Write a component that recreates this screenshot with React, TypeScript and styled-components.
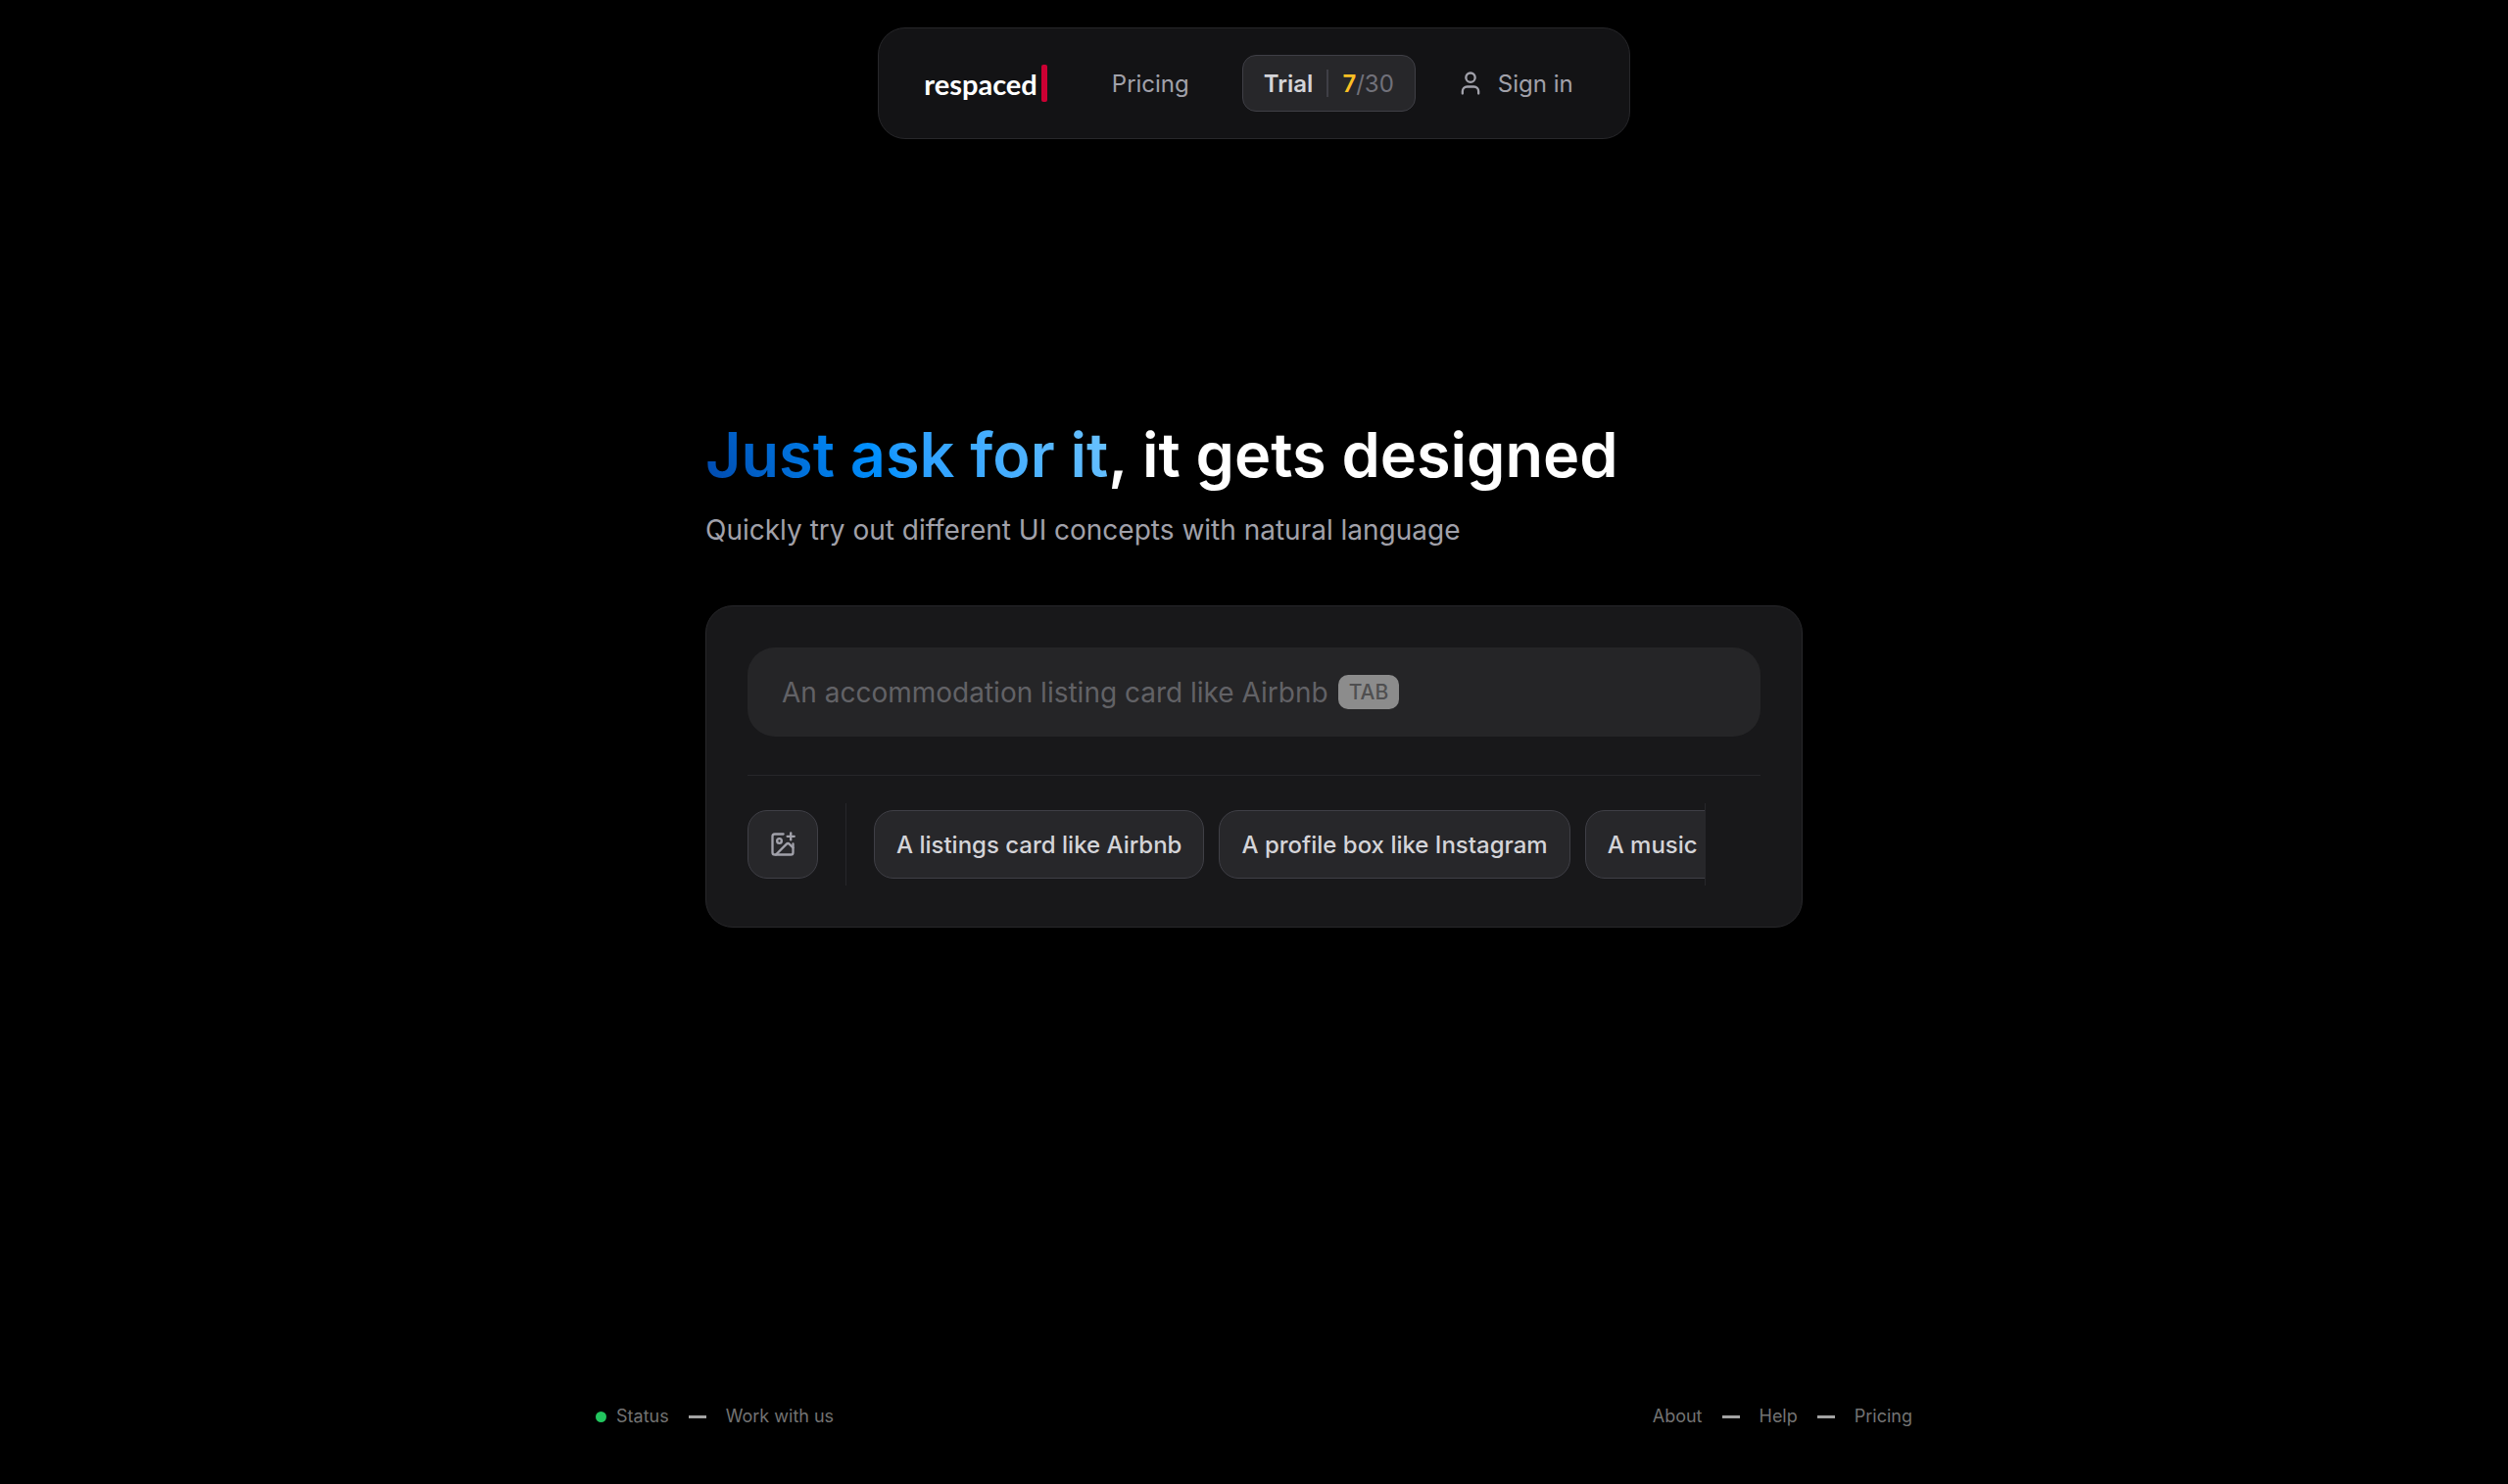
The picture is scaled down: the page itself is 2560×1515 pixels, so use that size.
import React, { useState } from "react";
import styled, { createGlobalStyle } from "styled-components";
import { ImagePlus, User } from "lucide-react";

const GlobalStyle = createGlobalStyle`
  *, *::before, *::after { box-sizing: border-box; }
  body {
    margin: 0;
    background: #000;
    font-family: Inter, "Liberation Sans", sans-serif;
  }
  button, input { font: inherit; }
  a { color: inherit; text-decoration: none; }
`;

const Page = styled.div`
  min-height: 100vh;
  display: flex;
  flex-direction: column;
  align-items: center;
  padding: 28px 28px 52px;
`;

const Nav = styled.nav`
  display: flex;
  align-items: center;
  padding: 27px 57px 27px 46px;
  background: #131315;
  border: 1px solid #27272a;
  border-radius: 28px;
  font-size: 24px;
  color: #a1a1aa;
`;

const Logo = styled.a`
  display: flex;
  align-items: center;
  gap: 4px;
  margin-right: 66px;
  color: #fff;
  font-family: Lato, Inter, sans-serif;
  font-size: 29px;
  font-weight: 700;
`;

const LogoBar = styled.span`
  width: 6px;
  height: 38px;
  border-radius: 2px;
  background: #cc0033;
`;

const NavLink = styled.a`
  display: flex;
  align-items: center;
  gap: 14px;
`;

const TrialButton = styled.button`
  display: flex;
  align-items: center;
  height: 58px;
  margin: 0 42px 0 54px;
  padding: 0 21px;
  background: #27272a;
  border: 1px solid #3f3f46;
  border-radius: 14px;
  color: #d4d4d8;
  font-weight: 600;
`;

const TrialCount = styled.span`
  display: flex;
  align-items: center;
  height: 28px;
  margin-left: 14px;
  padding-left: 14px;
  border-left: 2px solid #3f3f46;
  color: #71717a;
  font-weight: 400;
`;

const Used = styled.span`
  color: #fbbf24;
  font-weight: 600;
`;

const Main = styled.main`
  width: 100%;
  max-width: 1120px;
  margin: 280px 0 auto;
`;

const Title = styled.h1`
  margin: 0;
  font-size: 63px;
  line-height: 84px;
  font-weight: 600;
  color: #fff;
`;

const Highlight = styled.span`
  background: linear-gradient(60deg, #0047ab, #0090ff 43%, #2a9fff 50%, #6cc3ff);
  background-clip: text;
  color: transparent;
`;

const Subtitle = styled.p`
  margin: 15px 0 57px;
  font-size: 28px;
  line-height: 40px;
  color: #a1a1aa;
`;

const Card = styled.section`
  padding: 42px;
  background: #18181a;
  border: 1px solid #27272a;
  border-radius: 28px;
`;

const PromptField = styled.label`
  display: flex;
  align-items: center;
  gap: 10px;
  height: 91px;
  padding: 0 35px;
  background: #252527;
  border-radius: 28px;
`;

const PromptInput = styled.input`
  field-sizing: content;
  max-width: 100%;
  padding: 0;
  border: 0;
  outline: 0;
  background: transparent;
  color: #d4d4d8;
  font-size: 28px;
  &::placeholder { color: #626266; opacity: 1; }
`;

const Key = styled.kbd`
  padding: 0 11px;
  border-radius: 10px;
  background: #8c8c8c;
  color: #4f4f50;
  font: 500 21px/35px Inter, sans-serif;
`;

const Actions = styled.div`
  display: flex;
  align-items: center;
  margin-top: 39px;
  padding: 28px 56px 0 0;
  border-top: 1px solid #27272a;
`;

const ImageButton = styled.button`
  display: grid;
  place-items: center;
  flex: none;
  width: 72px;
  height: 70px;
  margin-right: 28px;
  padding: 0;
  background: #27272a;
  border: 1px solid #3f3f46;
  border-radius: 20px;
  color: #a1a1aa;
`;

const Suggestions = styled.div`
  flex: 1;
  min-width: 0;
  display: flex;
  gap: 15px;
  padding: 7px 0 7px 28px;
  border: solid #27272a;
  border-width: 0 1px;
  overflow: hidden;
`;

const Chip = styled.button`
  flex: none;
  height: 70px;
  padding: 0 22px;
  background: #27272a;
  border: 1px solid #3f3f46;
  border-radius: 20px;
  color: #d4d4d8;
  font-size: 24px;
  font-weight: 500;
  white-space: nowrap;
`;

const Footer = styled.footer`
  display: flex;
  justify-content: space-between;
  width: 100%;
  max-width: 1344px;
  color: #737373;
  font-size: 18px;
  line-height: 34px;
`;

const FooterGroup = styled.div`
  display: flex;
  align-items: center;
  gap: 20px;
`;

const FooterLink = styled.a`
  display: flex;
  align-items: center;
  gap: 10px;
`;

const StatusDot = styled.span`
  width: 11px;
  height: 11px;
  border-radius: 50%;
  background: #22c55e;
`;

const Dash = styled.span`
  width: 18px;
  height: 3px;
  background: #a3a3a3;
`;

const suggestions = [
  "A listings card like Airbnb",
  "A profile box like Instagram",
  "A music player like Spotify",
];

export default function App() {
  const [prompt, setPrompt] = useState("");
  return (
    <>
      <GlobalStyle />
      <Page>
        <Nav>
          <Logo href="#">
            respaced
            <LogoBar />
          </Logo>
          <NavLink href="#pricing">Pricing</NavLink>
          <TrialButton type="button">
            Trial
            <TrialCount>
              <Used>7</Used>/30
            </TrialCount>
          </TrialButton>
          <NavLink href="#sign-in">
            <User size={28} aria-hidden="true" />
            Sign in
          </NavLink>
        </Nav>
        <Main>
          <Title>
            <Highlight>Just ask for it</Highlight>, it gets designed
          </Title>
          <Subtitle>Quickly try out different UI concepts with natural language</Subtitle>
          <Card>
            <PromptField>
              <PromptInput
                aria-label="Prompt"
                placeholder="An accommodation listing card like Airbnb"
                value={prompt}
                onChange={(e) => setPrompt(e.target.value)}
              />
              {prompt === "" && <Key>TAB</Key>}
            </PromptField>
            <Actions>
              <ImageButton type="button" aria-label="Add image">
                <ImagePlus size={28} aria-hidden="true" />
              </ImageButton>
              <Suggestions>
                {suggestions.map((text) => (
                  <Chip key={text} type="button" onClick={() => setPrompt(text)}>
                    {text}
                  </Chip>
                ))}
              </Suggestions>
            </Actions>
          </Card>
        </Main>
        <Footer>
          <FooterGroup>
            <FooterLink href="#status">
              <StatusDot />
              Status
            </FooterLink>
            <Dash />
            <FooterLink href="#work">Work with us</FooterLink>
          </FooterGroup>
          <FooterGroup>
            <FooterLink href="#about">About</FooterLink>
            <Dash />
            <FooterLink href="#help">Help</FooterLink>
            <Dash />
            <FooterLink href="#pricing">Pricing</FooterLink>
          </FooterGroup>
        </Footer>
      </Page>
    </>
  );
}
